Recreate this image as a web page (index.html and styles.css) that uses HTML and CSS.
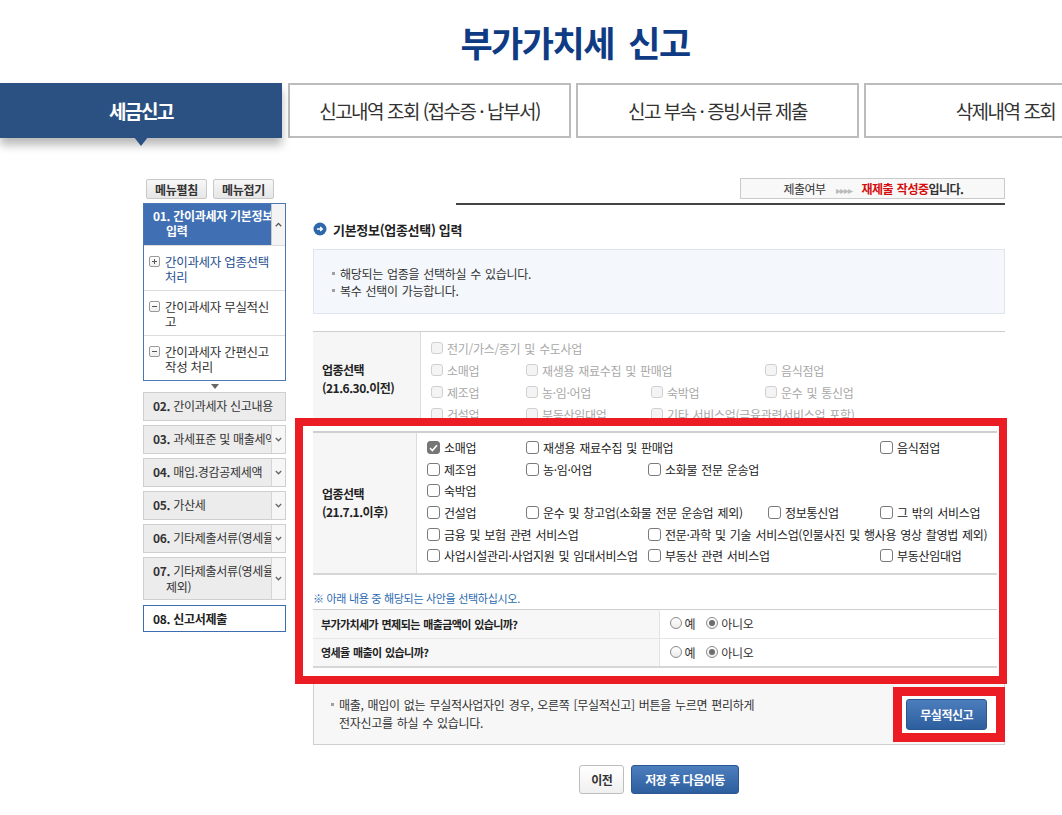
FILE: index.html
```html
<!DOCTYPE html>
<html lang="ko">
<head>
    <meta charset="UTF-8">
    <meta name="viewport" content="width=device-width, initial-scale=1.0">
    <title>부가가치세 신고</title>
    <link rel="stylesheet" href="styles.css">
</head>
<body>
<div class="page">

    <h1 class="title">부가가치세 신고</h1>

    <!-- 상단 탭 -->
    <div class="tabs">
        <div class="tab on">세금신고</div>
        <div class="tab">신고내역 조회 (접수증 · 납부서)</div>
        <div class="tab">신고 부속 · 증빙서류 제출</div>
        <div class="tab">삭제내역 조회</div>
    </div>

    <div class="content">

        <!-- 왼쪽 메뉴 -->
        <div class="side">
            <div class="side-btns">
                <button class="side-btn">메뉴펼침</button>
                <button class="side-btn">메뉴접기</button>
            </div>

            <div class="menu-open">
                <div class="menu-head">
                    <div class="menu-head-text">01. 간이과세자 기본정보<br>입력</div>
                    <div class="menu-scroll">
                        <svg width="7" height="5" viewBox="0 0 7 5"><path d="M0.8 4.2L3.5 1.4 6.2 4.2" fill="none" stroke="#555" stroke-width="1.3"/></svg>
                    </div>
                </div>
                <div class="sub-item blue"><span class="pm plus"></span><span>간이과세자 업종선택<br>처리</span></div>
                <div class="sub-item"><span class="pm"></span><span>간이과세자 무실적신<br>고</span></div>
                <div class="sub-item"><span class="pm"></span><span>간이과세자 간편신고<br>작성 처리</span></div>
            </div>
            <div class="menu-down"></div>

            <div class="menu-item"><div class="txt"><b>02.</b> 간이과세자 신고내용</div></div>
            <div class="menu-item"><div class="txt"><b>03.</b> 과세표준 및 매출세액</div><div class="arr"><svg width="7" height="5" viewBox="0 0 7 5"><path d="M0.8 1L3.5 3.8 6.2 1" fill="none" stroke="#666" stroke-width="1.3"/></svg></div></div>
            <div class="menu-item"><div class="txt"><b>04.</b> 매입.경감공제세액</div><div class="arr"><svg width="7" height="5" viewBox="0 0 7 5"><path d="M0.8 1L3.5 3.8 6.2 1" fill="none" stroke="#666" stroke-width="1.3"/></svg></div></div>
            <div class="menu-item"><div class="txt"><b>05.</b> 가산세</div><div class="arr"><svg width="7" height="5" viewBox="0 0 7 5"><path d="M0.8 1L3.5 3.8 6.2 1" fill="none" stroke="#666" stroke-width="1.3"/></svg></div></div>
            <div class="menu-item"><div class="txt"><b>06.</b> 기타제출서류(영세율</div><div class="arr"><svg width="7" height="5" viewBox="0 0 7 5"><path d="M0.8 1L3.5 3.8 6.2 1" fill="none" stroke="#666" stroke-width="1.3"/></svg></div></div>
            <div class="menu-item"><div class="txt two"><b>07.</b> 기타제출서류(영세율<br>제외)</div><div class="arr"><svg width="7" height="5" viewBox="0 0 7 5"><path d="M0.8 1L3.5 3.8 6.2 1" fill="none" stroke="#666" stroke-width="1.3"/></svg></div></div>
            <div class="menu-item cur"><div class="txt">08. 신고서제출</div></div>
        </div>

        <!-- 본문 -->
        <div class="main">
            <div class="status-row">
                <div class="status">제출여부 <span class="arrows">▸▸▸▸</span> <b class="red">재제출 작성중</b><b>입니다.</b></div>
            </div>
            <div class="status-line"></div>

            <h2 class="sec-title">
                <svg class="sec-icon" width="14" height="14" viewBox="0 0 14 14"><circle cx="7" cy="7" r="6.5" fill="#2e68aa"/><path d="M4 7h5.2M7.2 4.9L9.3 7 7.2 9.1" fill="none" stroke="#fff" stroke-width="1.4"/></svg>
                기본정보(업종선택) 입력
            </h2>

            <div class="info-box">
                <p class="dot">해당되는 업종을 선택하실 수 있습니다.</p>
                <p class="dot">복수 선택이 가능합니다.</p>
            </div>

            <!-- 21.6.30 이전 (비활성) -->
            <div class="old-wrap">
                <div class="biz-table old">
                    <div class="biz-head">업종선택<br>(21.6.30.이전)</div>
                    <div class="biz-list">
                        <label class="chk c1 sall"><span class="cb"></span>전기/가스/증기 및 수도사업</label>
                        <label class="chk c1"><span class="cb"></span>소매업</label>
                        <label class="chk c2"><span class="cb"></span>재생용 재료수집 및 판매업</label>
                        <label class="chk c4"><span class="cb"></span>음식점업</label>
                        <label class="chk c1"><span class="cb"></span>제조업</label>
                        <label class="chk c2"><span class="cb"></span>농·임·어업</label>
                        <label class="chk c3"><span class="cb"></span>숙박업</label>
                        <label class="chk c4"><span class="cb"></span>운수 및 통신업</label>
                        <label class="chk c1"><span class="cb"></span>건설업</label>
                        <label class="chk c2"><span class="cb"></span>부동산임대업</label>
                        <label class="chk c3 s2"><span class="cb"></span>기타 서비스업(금융관련서비스업 포함)</label>
                        <label class="chk c1"><span class="cb"></span>금융 및 보험업</label>
                    </div>
                </div>
            </div>

            <!-- 강조 영역 -->
            <div class="mark-box">
                <div class="biz-table new">
                    <div class="biz-head">업종선택<br>(21.7.1.이후)</div>
                    <div class="biz-list">
                        <label class="chk c1"><span class="cb on"><svg width="9" height="8" viewBox="0 0 9 8"><path d="M1 4.2L3.4 6.5 8 1.2" fill="none" stroke="#fff" stroke-width="1.6"/></svg></span>소매업</label>
                        <label class="chk c2"><span class="cb"></span>재생용 재료수집 및 판매업</label>
                        <label class="chk c5"><span class="cb"></span>음식점업</label>
                        <label class="chk c1"><span class="cb"></span>제조업</label>
                        <label class="chk c2"><span class="cb"></span>농·임·어업</label>
                        <label class="chk c3"><span class="cb"></span>소화물 전문 운송업</label>
                        <label class="chk c1"><span class="cb"></span>숙박업</label>
                        <label class="chk c1"><span class="cb"></span>건설업</label>
                        <label class="chk c2 s2"><span class="cb"></span>운수 및 창고업(소화물 전문 운송업 제외)</label>
                        <label class="chk c4"><span class="cb"></span>정보통신업</label>
                        <label class="chk c5"><span class="cb"></span>그 밖의 서비스업</label>
                        <label class="chk c1 s2"><span class="cb"></span>금융 및 보험 관련 서비스업</label>
                        <label class="chk c3 s3"><span class="cb"></span>전문·과학 및 기술 서비스업(인물사진 및 행사용 영상 촬영법 제외)</label>
                        <label class="chk c1 s2"><span class="cb"></span>사업시설관리·사업지원 및 임대서비스업</label>
                        <label class="chk c3"><span class="cb"></span>부동산 관련 서비스업</label>
                        <label class="chk c5"><span class="cb"></span>부동산임대업</label>
                    </div>
                </div>

                <p class="note">※ 아래 내용 중 해당되는 사안을 선택하십시오.</p>

                <table class="q-table">
                    <tr>
                        <th>부가가치세가 면제되는 매출금액이 있습니까?</th>
                        <td><label class="rdo"><span class="rd"></span>예</label><label class="rdo"><span class="rd on"></span>아니오</label></td>
                    </tr>
                    <tr>
                        <th>영세율 매출이 있습니까?</th>
                        <td><label class="rdo"><span class="rd"></span>예</label><label class="rdo"><span class="rd on"></span>아니오</label></td>
                    </tr>
                </table>
            </div>

            <div class="nil-box">
                <p class="dot">매출, 매입이 없는 무실적사업자인 경우, 오른쪽 [무실적신고] 버튼을 누르면 편리하게<br>전자신고를 하실 수 있습니다.</p>
                <div class="mark-btn"><button class="btn-blue">무실적신고</button></div>
            </div>

            <div class="bottom-btns">
                <button class="btn-white">이전</button>
                <button class="btn-blue small">저장 후 다음이동</button>
            </div>
        </div>
    </div>
</div>
</body>
</html>
```

FILE: styles.css
```css
/* 기본 */
* {
    margin: 0;
    padding: 0;
    box-sizing: border-box;
}

body {
    font-family: "Noto Sans CJK KR", "Noto Sans", sans-serif;
    color: #222;
    background: #fff;
    overflow: hidden;
}

button {
    font-family: inherit;
    cursor: pointer;
}

.page {
    width: 1150px;
}

/* 제목 */
.title {
    height: 83px;
    padding-top: 22px;
    text-align: center;
    font-size: 35px;
    line-height: 40px;
    font-weight: bold;
    letter-spacing: -1.5px;
    word-spacing: 6px;
    color: #0f3b84;
}

/* 상단 탭 */
.tabs {
    display: flex;
    gap: 5px;
    height: 55px;
}

.tab {
    width: 283px;
    flex: none;
    display: flex;
    align-items: center;
    justify-content: center;
    border: 2px solid #bcbcbc;
    background: #fff;
    font-size: 19px;
    letter-spacing: -1.5px;
    color: #333;
}

.tab.on {
    position: relative;
    width: 282px;
    margin-right: 1px;
    background: #2a5182;
    border-color: #2a5182;
    color: #fff;
    font-weight: bold;
    box-shadow: 0 7px 9px rgba(0, 0, 0, 0.28);
}

.tab.on::after {
    content: "";
    position: absolute;
    left: 50%;
    bottom: -10px;
    margin-left: -7px;
    border-left: 7px solid transparent;
    border-right: 7px solid transparent;
    border-top: 9px solid #2a5182;
}

/* 본문 레이아웃 */
.content {
    display: flex;
    gap: 27px;
    padding: 40px 0 0 143px;
}

.side {
    width: 143px;
    flex: none;
    font-size: 12px;
    letter-spacing: -0.3px;
}

.main {
    width: 692px;
    flex: none;
    font-size: 12px;
    letter-spacing: -0.3px;
    word-spacing: 1px;
}

/* 왼쪽 메뉴 */
.side-btns {
    display: flex;
    gap: 6px;
    padding: 1px 0 0 3px;
    margin-bottom: 4px;
}

.side-btn {
    width: 61px;
    height: 20px;
    border: 1px solid #c8c8c8;
    border-radius: 2px;
    background: linear-gradient(#f7f7f7, #e6e6e6);
    font-size: 12px;
    font-weight: bold;
    letter-spacing: -0.3px;
    color: #333;
}

.menu-open {
    border: 1px solid #4a77b4;
    background: #fff;
}

.menu-head {
    display: flex;
    height: 41px;
    background: #4070b3;
}

.menu-head-text {
    flex: 1;
    padding: 4px 0 0 22px;
    text-indent: -13px;
    line-height: 15px;
    white-space: nowrap;
    overflow: hidden;
    color: #fff;
    font-weight: bold;
}

.menu-scroll {
    width: 14px;
    flex: none;
    display: flex;
    align-items: center;
    justify-content: center;
    background: #f4f4f4;
    border-left: 1px solid #c9c9c9;
}

.sub-item {
    display: flex;
    gap: 5px;
    height: 45px;
    padding: 8px 2px 0 5px;
    border-top: 1px solid #dcdcdc;
    font-size: 12.5px;
    line-height: 15px;
    white-space: nowrap;
    color: #333;
}

.sub-item.blue {
    color: #1f4f92;
}

.pm {
    position: relative;
    width: 11px;
    height: 11px;
    flex: none;
    margin-top: 2px;
    border: 1px solid #9a9a9a;
    border-radius: 2px;
    background: linear-gradient(#fff, #eee);
}

.pm::before {
    content: "";
    position: absolute;
    left: 2px;
    top: 4px;
    width: 5px;
    height: 1px;
    background: #555;
}

.pm.plus::after {
    content: "";
    position: absolute;
    left: 4px;
    top: 2px;
    width: 1px;
    height: 5px;
    background: #555;
}

.menu-down {
    width: 0;
    height: 0;
    margin: 3px auto 0;
    border-left: 4px solid transparent;
    border-right: 4px solid transparent;
    border-top: 5px solid #666;
}

.menu-item {
    display: flex;
    min-height: 29px;
    margin-top: 4px;
    background: #ececec;
    border: 1px solid #cfcfcf;
    color: #333;
}

.menu-down + .menu-item {
    margin-top: 3px;
}

.menu-item .txt {
    flex: 1;
    padding: 5px 0 0 9px;
    line-height: 16px;
    white-space: nowrap;
    overflow: hidden;
}

.menu-item .txt.two {
    padding: 5px 0 4px 22px;
    text-indent: -13px;
}

.menu-item .arr {
    width: 14px;
    flex: none;
    display: flex;
    align-items: center;
    justify-content: center;
    background: #f6f6f6;
    border-left: 1px solid #d6d6d6;
}

.menu-item.cur {
    min-height: 27px;
    margin-top: 5px;
    background: #fff;
    border-color: #3f6eb0;
    font-weight: bold;
    color: #222;
}

/* 제출여부 */
.status-row {
    display: flex;
    justify-content: flex-end;
}

.status {
    width: 265px;
    height: 21px;
    padding-left: 2px;
    border: 1px solid #cacaca;
    background: #f8f8f8;
    text-align: center;
    font-size: 12px;
    line-height: 19px;
    letter-spacing: -0.5px;
    color: #333;
}

.status .arrows {
    margin: 0 6px;
    font-size: 10px;
    letter-spacing: -1px;
    color: #bbb;
}

.status .red {
    color: #d40d0d;
}

.status-line {
    height: 2px;
    margin: 4px 0 0 143px;
    background: #444;
}

/* 섹션 제목 */
.sec-title {
    display: flex;
    align-items: center;
    gap: 6px;
    height: 20px;
    margin-top: 14px;
    font-size: 13px;
    letter-spacing: -0.3px;
    word-spacing: 0;
    color: #222;
}

.info-box {
    height: 65px;
    margin-top: 10px;
    padding: 15px 0 0 18px;
    background: #f4f7fb;
    border: 1px solid #dfe5ee;
    line-height: 17px;
    color: #333;
}

.dot {
    position: relative;
    padding-left: 8px;
}

.dot::before {
    content: "";
    position: absolute;
    left: 0;
    top: 7px;
    width: 3px;
    height: 3px;
    background: #a0a0a0;
}

/* 업종 선택 표 */
.old-wrap {
    height: 87px;
    margin-top: 17px;
    overflow: hidden;
}

.biz-table {
    display: flex;
    border-top: 1px solid #cfcfcf;
}

.biz-head {
    flex: none;
    width: 108px;
    padding: 29px 0 0 9px;
    background: #f6f6f6;
    border-right: 1px solid #dcdcdc;
    font-weight: bold;
    line-height: 18px;
    letter-spacing: -0.5px;
}

.biz-list {
    flex: 1;
    display: grid;
    grid-template-columns: 95px 125px 114px 1fr;
    grid-auto-rows: 22px;
    align-items: center;
    padding: 5px 0 6px 10px;
}

.chk {
    display: flex;
    align-items: center;
    gap: 4px;
    white-space: nowrap;
}

.c1 { grid-column-start: 1; }
.c2 { grid-column-start: 2; }
.c3 { grid-column-start: 3; }
.c4 { grid-column-start: 4; }
.c5 { grid-column-start: 5; }
.s2 { grid-column-end: span 2; }
.s3 { grid-column-end: span 3; }
.sall { grid-column-end: -1; }

.cb {
    width: 13px;
    height: 13px;
    flex: none;
    display: inline-flex;
    align-items: center;
    justify-content: center;
    border: 1px solid #7a7a7a;
    border-radius: 3px;
    background: #fff;
}

.cb.on {
    background: #767676;
    border-color: #767676;
}

.old .chk {
    color: #a8a8a8;
}

.old .cb {
    width: 12px;
    height: 12px;
    border-color: #d0d0d0;
    background: #f4f4f4;
}

/* 강조 박스 */
.mark-box {
    margin: 0 -2px 0 -18px;
    padding: 5px 2px 8px 10px;
    border: 8px solid #ec1c24;
    background: #fff;
}

.new {
    border-top: 2px solid #cfcfcf;
    border-bottom: 2px solid #d6d6d6;
}

.new .biz-head {
    width: 104px;
    padding: 0 0 0 9px;
    display: flex;
    align-items: center;
}

.new .biz-list {
    grid-template-columns: 99px 122px 120px 112px 1fr;
    grid-auto-rows: 21.6px;
    padding: 4px 0 6px 10px;
}

.note {
    margin-top: 15px;
    font-size: 11px;
    line-height: 16px;
    letter-spacing: -0.3px;
    word-spacing: 0;
    color: #2b69b0;
}

.q-table {
    width: 100%;
    margin-top: 3px;
    border-collapse: collapse;
    border-top: 1px solid #cfcfcf;
    border-bottom: 2px solid #d6d6d6;
}

.q-table th {
    width: 346px;
    height: 29px;
    padding-left: 8px;
    text-align: left;
    background: #f7f7f7;
    border-right: 1px solid #e2e2e2;
    border-bottom: 1px solid #e6e6e6;
    font-size: 11px;
    letter-spacing: -0.6px;
    color: #222;
}

.q-table td {
    padding-left: 10px;
    border-bottom: 1px solid #e6e6e6;
}

.rdo {
    display: inline-flex;
    align-items: center;
    gap: 3px;
    margin-right: 11px;
    color: #333;
}

.rd {
    position: relative;
    width: 12px;
    height: 12px;
    border: 1px solid #8a8a8a;
    border-radius: 50%;
    background: linear-gradient(#fff, #ececec);
}

.rd.on::after {
    content: "";
    position: absolute;
    left: 2px;
    top: 2px;
    width: 6px;
    height: 6px;
    border-radius: 50%;
    background: #6d6d6d;
}

/* 무실적 안내 */
.nil-box {
    display: flex;
    align-items: center;
    justify-content: space-between;
    height: 61px;
    padding-left: 17px;
    background: #f7f7f7;
    border: 1px solid #cfcfcf;
    border-top: none;
    line-height: 18px;
    color: #333;
}

.mark-btn {
    margin-right: -1px;
    padding: 3px 9px 3px 4px;
    border: 9px solid #ec1c24;
    background: #fff;
}

.btn-blue {
    height: 31px;
    padding: 0 13px;
    border: 1px solid #2a5793;
    border-radius: 3px;
    background: linear-gradient(#4c7dbd, #2d5e9e);
    color: #fff;
    font-size: 12px;
    font-weight: bold;
    letter-spacing: -0.5px;
}

.btn-blue.small {
    height: 29px;
}

.btn-white {
    height: 29px;
    padding: 0 11px;
    border: 1px solid #bdbdbd;
    border-radius: 3px;
    background: linear-gradient(#fff, #f0f0f0);
    color: #333;
    font-size: 12px;
    font-weight: bold;
    letter-spacing: -0.5px;
}

.bottom-btns {
    display: flex;
    justify-content: center;
    gap: 7px;
    margin-top: 20px;
}
```
